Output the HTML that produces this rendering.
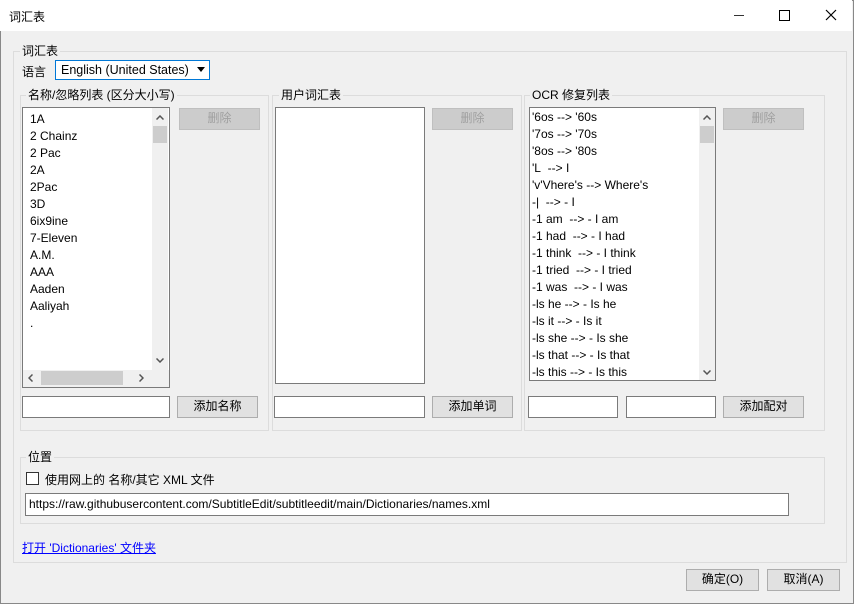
<!DOCTYPE html><html><head><meta charset="utf-8"><style>
body{margin:0;width:854px;height:604px;background:#f0f0f0;font-family:"Liberation Sans","Noto Sans CJK SC",sans-serif;font-size:12px;color:#000;position:relative;overflow:hidden}
.a{position:absolute}
.win{position:absolute;left:0;top:0;width:852px;height:602px;border:1px solid #888}
.tb{position:absolute;left:0;top:0;width:852px;height:31px;background:#fff}
.grp{position:absolute;border:1px solid #dcdcdc}
.lbl{position:absolute;background:#f0f0f0;padding:0 2px;line-height:14px}
.box{position:absolute;background:#fff;border:1px solid #7a7a7a;box-sizing:border-box}
.btn{position:absolute;background:#e1e1e1;border:1px solid #adadad;box-sizing:border-box;text-align:center;line-height:19px;height:22px}
.dis{color:#a0a0a0;background:#cccccc;border-color:#bfbfbf}
.list div{height:17px;line-height:17px;padding-left:7px;white-space:nowrap}
.vs{position:absolute;background:#f0f0f0;width:16px}
svg{position:absolute}
</style></head><body>
<div class="win"></div>
<div class="tb"></div>
<div class="a" style="left:9px;top:8px;font-size:12px">词汇表</div>
<div class="a" style="left:734px;top:15px;width:10px;height:1px;background:#333"></div>
<div class="a" style="left:779px;top:10px;width:9px;height:9px;border:1px solid #000"></div>
<svg style="left:825px;top:9px" width="12" height="12"><path d="M1 1L11 11M11 1L1 11" stroke="#000" stroke-width="1.2"/></svg>

<div class="grp" style="left:13px;top:51px;width:832px;height:510px"></div>
<div class="lbl" style="left:20px;top:44px">词汇表</div>
<div class="a" style="left:22px;top:63px">语言</div>
<div class="box" style="left:55px;top:60px;width:155px;height:20px;border-color:#0078d7;padding:2px 5px;line-height:14px;font-size:12.5px">English (United States)<svg style="right:4px;top:6px" width="8" height="5"><path d="M0 0H8L4 5Z" fill="#000"/></svg></div>

<div class="grp" style="left:20px;top:95px;width:247px;height:334px"></div>
<div class="lbl" style="left:26px;top:88px">名称/忽略列表 (区分大小写)</div>
<div class="box list" style="left:22px;top:107px;width:148px;height:281px;overflow:hidden;padding-top:3px">
<div>1A</div><div>2 Chainz</div><div>2 Pac</div><div>2A</div><div>2Pac</div><div>3D</div><div>6ix9ine</div><div>7-Eleven</div><div>A.M.</div><div>AAA</div><div>Aaden</div><div>Aaliyah</div><div>.</div>
<div class="vs" style="left:129px;top:0;height:262px;padding:0"><svg style="left:4px;top:7px" width="8" height="5"><path d="M0.5 4.5L4 1L7.5 4.5" stroke="#555" fill="none" stroke-width="1.5"/></svg><div class="a" style="left:1px;top:18px;width:14px;height:17px;background:#cdcdcd;padding:0"></div><svg style="left:4px;top:250px" width="8" height="5"><path d="M0.5 0.5L4 4L7.5 0.5" stroke="#555" fill="none" stroke-width="1.5"/></svg></div>
<div class="a" style="left:0;top:262px;width:146px;height:17px;background:#f0f0f0;padding:0"><svg style="left:5px;top:4px" width="5" height="8"><path d="M4.5 0.5L1 4L4.5 7.5" stroke="#555" fill="none" stroke-width="1.5"/></svg><div class="a" style="left:18px;top:1px;width:82px;height:14px;background:#cdcdcd;padding:0"></div><svg style="left:116px;top:4px" width="5" height="8"><path d="M0.5 0.5L4 4L0.5 7.5" stroke="#555" fill="none" stroke-width="1.5"/></svg></div>
</div>
<div class="btn dis" style="left:179px;top:108px;width:81px">删除</div>
<div class="box" style="left:22px;top:396px;width:148px;height:22px"></div>
<div class="btn" style="left:177px;top:396px;width:81px">添加名称</div>

<div class="grp" style="left:272px;top:95px;width:248px;height:334px"></div>
<div class="lbl" style="left:279px;top:88px">用户词汇表</div>
<div class="box" style="left:275px;top:107px;width:150px;height:277px"></div>
<div class="btn dis" style="left:432px;top:108px;width:81px">删除</div>
<div class="box" style="left:274px;top:396px;width:151px;height:22px"></div>
<div class="btn" style="left:432px;top:396px;width:81px">添加单词</div>

<div class="grp" style="left:524px;top:95px;width:299px;height:334px"></div>
<div class="lbl" style="left:530px;top:88px">OCR 修复列表</div>
<div class="box list" style="left:529px;top:107px;width:187px;height:274px;overflow:hidden;padding-top:1px">
<div style="padding-left:2px">'6os --&gt; '60s</div><div style="padding-left:2px">'7os --&gt; '70s</div><div style="padding-left:2px">'8os --&gt; '80s</div><div style="padding-left:2px">'L&nbsp; --&gt; I</div><div style="padding-left:2px">'v'Vhere's --&gt; Where's</div><div style="padding-left:2px">-|&nbsp; --&gt; - I</div><div style="padding-left:2px">-1 am&nbsp; --&gt; - I am</div><div style="padding-left:2px">-1 had&nbsp; --&gt; - I had</div><div style="padding-left:2px">-1 think&nbsp; --&gt; - I think</div><div style="padding-left:2px">-1 tried&nbsp; --&gt; - I tried</div><div style="padding-left:2px">-1 was&nbsp; --&gt; - I was</div><div style="padding-left:2px">-ls he --&gt; - Is he</div><div style="padding-left:2px">-ls it --&gt; - Is it</div><div style="padding-left:2px">-ls she --&gt; - Is she</div><div style="padding-left:2px">-ls that --&gt; - Is that</div><div style="padding-left:2px">-ls this --&gt; - Is this</div>
<div class="vs" style="left:169px;top:0;height:272px;padding:0"><svg style="left:4px;top:7px" width="8" height="5"><path d="M0.5 4.5L4 1L7.5 4.5" stroke="#555" fill="none" stroke-width="1.5"/></svg><div class="a" style="left:1px;top:18px;width:14px;height:17px;background:#cdcdcd;padding:0"></div><svg style="left:4px;top:262px" width="8" height="5"><path d="M0.5 0.5L4 4L7.5 0.5" stroke="#555" fill="none" stroke-width="1.5"/></svg></div>
</div>
<div class="btn dis" style="left:723px;top:108px;width:81px">删除</div>
<div class="box" style="left:528px;top:396px;width:90px;height:22px"></div>
<div class="box" style="left:626px;top:396px;width:90px;height:22px"></div>
<div class="btn" style="left:723px;top:396px;width:81px">添加配对</div>

<div class="grp" style="left:20px;top:457px;width:803px;height:65px"></div>
<div class="lbl" style="left:26px;top:450px">位置</div>
<div class="a" style="left:26px;top:472px;width:11px;height:11px;border:1px solid #333;background:#fff"></div>
<div class="a" style="left:45px;top:471px">使用网上的 名称/其它 XML 文件</div>
<div class="box" style="left:25px;top:493px;width:764px;height:23px;padding:3px 3px;line-height:15px">https://raw.githubusercontent.com/SubtitleEdit/subtitleedit/main/Dictionaries/names.xml</div>

<div class="a" style="left:22px;top:539px;color:#0000ff;text-decoration:underline">打开 'Dictionaries' 文件夹</div>

<div class="btn" style="left:686px;top:569px;width:73px">确定(O)</div>
<div class="btn" style="left:767px;top:569px;width:73px">取消(A)</div>
</body></html>
